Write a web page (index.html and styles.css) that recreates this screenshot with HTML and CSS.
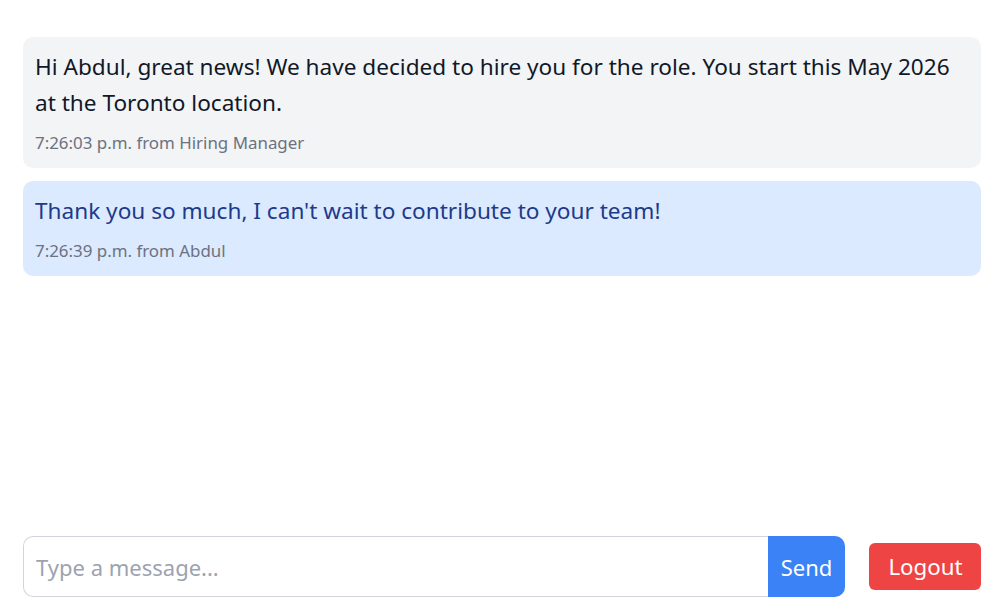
FILE: index.html
```html
<!DOCTYPE html>
<html>
<head>
<meta charset="utf-8">
<link rel="stylesheet" href="styles.css">
</head>
<body>
<div class="app">
  <div class="messages">
    <div class="bubble bubble-them">
      <div class="msg-text">Hi Abdul, great news! We have decided to hire you for the role. You start this May 2026 at the Toronto location.</div>
      <div class="msg-meta">7:26:03 p.m. from Hiring Manager</div>
    </div>
    <div class="bubble bubble-me">
      <div class="msg-text">Thank you so much, I can't wait to contribute to your team!</div>
      <div class="msg-meta">7:26:39 p.m. from Abdul</div>
    </div>
  </div>
  <div class="composer">
    <div class="input-group">
      <input class="msg-input" type="text" placeholder="Type a message...">
      <button class="send-btn">Send</button>
    </div>
    <button class="logout-btn">Logout</button>
  </div>
</div>
</body>
</html>
```
FILE: styles.css
```css
* { box-sizing: border-box; }
html, body { margin: 0; padding: 0; height: 100%; background: #ffffff; }
body { font-family: "Noto Sans", "Open Sans", sans-serif; }
.app {
  height: 613px;
  display: flex;
  flex-direction: column;
  padding: 37px 22px 16px 23px;
}
.messages {
  flex: 1;
  display: flex;
  flex-direction: column;
  gap: 13px;
}
.bubble {
  border-radius: 10px;
  padding: 12px 12px 12px 12px;
}
.bubble-them { background: #f3f4f6; color: #111827; }
.bubble-me { background: #dbeafe; color: #1e3a8a; }
.msg-text {
  font-size: 22.6px;
  line-height: 36px;
}
.msg-meta {
  font-size: 16.9px;
  line-height: 27px;
  margin-top: 8px;
  color: #6b7280;
}
.composer {
  display: flex;
  align-items: center;
  gap: 24px;
}
.input-group {
  flex: 1;
  display: flex;
  height: 61px;
}
.msg-input {
  flex: 1;
  border: 1px solid #d1d5db;
  border-right: none;
  border-radius: 10px 0 0 10px;
  padding: 0 12px;
  font-family: inherit;
  font-size: 22px;
  color: #111827;
  outline: none;
}
.msg-input::placeholder { color: #9ca3af; }
.send-btn {
  width: 77px;
  border: none;
  background: #3b82f6;
  color: #ffffff;
  border-radius: 0 10px 10px 0;
  font-family: inherit;
  font-size: 22px;
  padding: 0;
}
.logout-btn {
  width: 112px;
  height: 47px;
  border: none;
  background: #ef4444;
  color: #ffffff;
  border-radius: 6px;
  font-family: inherit;
  font-size: 22.3px;
  padding: 0 0 0 1px;
}
```
